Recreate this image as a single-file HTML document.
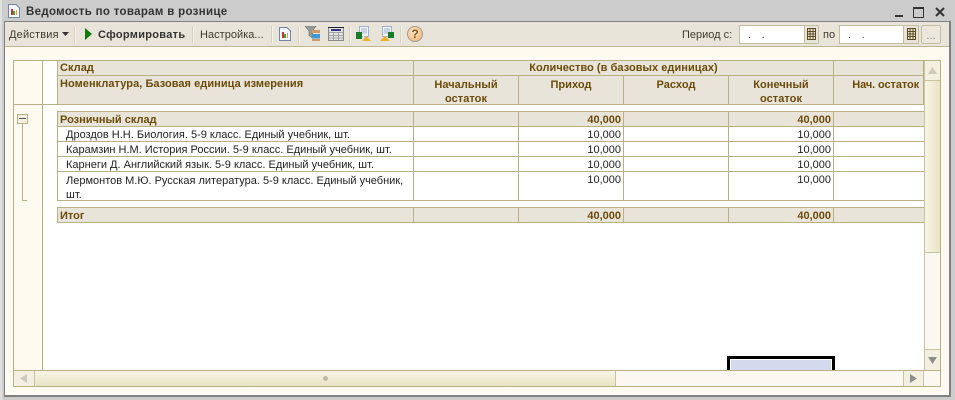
<!DOCTYPE html>
<html><head><meta charset="utf-8">
<style>
html,body{margin:0;padding:0;background:#ccc;width:955px;height:400px;overflow:hidden}
#p{position:relative;width:955px;height:400px;overflow:hidden;font-family:"Liberation Sans",sans-serif;font-size:11px;color:#222}
.a{position:absolute}
.t{position:absolute;white-space:nowrap;line-height:13px}
.h{position:absolute;background:#e9e4d9;border:1px solid #b9b088;box-sizing:border-box;color:#6b4b0a;font-weight:bold;line-height:14px;letter-spacing:.05px}
.c{position:absolute;background:#fff;border:1px solid #b9b088;box-sizing:border-box;line-height:13px;white-space:nowrap;color:#222;padding-top:2px}
.g{background:#e9e4d9;color:#6b4b0a;font-weight:bold}
.r{text-align:right;padding-right:2px}
.sep{position:absolute;top:26px;width:1px;height:17px;background:#d6d0bd;border-right:1px solid #f6f3ea}
</style></head><body><div id="p">
<!-- frame -->
<div class="a" style="left:0;top:0;width:2px;height:400px;background:#e0e0e0"></div>
<div class="a" style="left:4px;top:21px;width:947px;height:376px;box-sizing:border-box;border:1px solid #808080;border-right:2px solid #808080;border-bottom:2px solid #808080;background:#fffaf0;box-shadow:inset 1px 0 0 #fff,inset -1px 0 0 #fff,inset 0 -1px 0 #fff"></div>
<!-- title -->
<svg class="a" style="left:8px;top:4px" width="12" height="14" viewBox="0 0 12 14"><path d="M.5 .5H8L11.500 4V13.500H.5Z" fill="#f4f6fa" stroke="#6f87a8"/><rect x="3" y="5" width="2" height="6" fill="#c33"/><rect x="5" y="7" width="2" height="4" fill="#3a3"/><rect x="8" y="6" width="1" height="5" fill="#d9a23a"/></svg>
<div class="t" style="left:26px;top:6px;font-weight:bold;font-size:11.500px;color:#333;letter-spacing:.32px">Ведомость по товарам в рознице</div>
<div class="a" style="left:895px;top:15px;width:8px;height:2px;background:#333"></div>
<div class="a" style="left:913px;top:7px;width:11px;height:11px;box-sizing:border-box;border:1px solid #333;border-top-width:2px"></div>
<svg class="a" style="left:935px;top:7px" width="10" height="10" viewBox="0 0 10 10"><path d="M1 1L9 9M9 1L1 9" stroke="#333" stroke-width="2"/></svg>
<!-- toolbar -->
<div class="a" style="left:5px;top:22px;width:944px;height:24px;background:#e9e4d9;border-bottom:1px solid #bdb58f"></div>
<div class="t" style="left:9px;top:29px;color:#3d3d2d;letter-spacing:.2px">Действия</div>
<svg class="a" style="left:62px;top:32px" width="7" height="4"><path d="M0 0H7L3.500 4Z" fill="#333"/></svg>
<div class="sep" style="left:74px"></div>
<svg class="a" style="left:85px;top:28px" width="7" height="12"><path d="M0 0L7 6L0 12Z" fill="#0f7a0f"/></svg>
<div class="t" style="left:98px;top:29px;font-weight:bold;color:#333;letter-spacing:.3px">Сформировать</div>
<div class="sep" style="left:192px"></div>
<div class="t" style="left:200px;top:29px;color:#3d3d2d;letter-spacing:.03px">Настройка...</div>
<div class="sep" style="left:271px"></div>
<svg class="a" style="left:279px;top:27px" width="12" height="14" viewBox="0 0 12 14"><path d="M.5 .5H8L11.500 4V13.500H.5Z" fill="#f4f6fa" stroke="#6f87a8"/><rect x="3" y="5" width="2" height="6" fill="#c33"/><rect x="5" y="7" width="2" height="4" fill="#3a3"/><rect x="8" y="6" width="1" height="5" fill="#d9a23a"/></svg>
<div class="sep" style="left:298px"></div>
<svg class="a" style="left:305px;top:26px" width="16" height="16" viewBox="0 0 16 16"><path d="M0 0H11L7.500 5V12L4 9.500V5Z" fill="#9a9a92" stroke="#6d6d68" stroke-width=".6"/><rect x="7" y="4" width="8" height="3" fill="#cf9a63"/><rect x="7" y="8" width="8" height="2.500" fill="#3b9ad2"/><rect x="7" y="10.500" width="8" height="2" fill="#3b9ad2"/><rect x="7" y="13" width="8" height="2" fill="#cf9a63"/></svg>
<svg class="a" style="left:328px;top:27px" width="16" height="14" viewBox="0 0 16 14"><rect x=".5" y=".5" width="15" height="13" fill="#e2e2e2" stroke="#8a8a8a"/><rect x="0" y="0" width="16" height="1" fill="#222"/><rect x="3" y="2" width="10" height="2" fill="#33338f"/><path d="M1 5.500H15M1 8.500H15M1 11H15M5.500 5V13M10.500 5V13" stroke="#a5a5a5"/></svg>
<div class="sep" style="left:349px"></div>
<svg class="a" style="left:355px;top:25px" width="18" height="18" viewBox="0 0 18 18"><rect x="4.500" y="1.500" width="9" height="10" fill="#f0f4fa" stroke="#9fb2c8"/><path d="M6 4H12M6 6H12M6 8H12" stroke="#9fb2c8"/><path d="M1 7H7V14H1Z" fill="#1d7a2a"/><path d="M7 13L9 11" stroke="#d0e0d0"/><path d="M7 16L11.500 11L16 16Z" fill="#e9b22e"/></svg>
<svg class="a" style="left:379px;top:25px" width="18" height="18" viewBox="0 0 18 18"><rect x="3.500" y="1.500" width="9" height="10" fill="#f0f4fa" stroke="#9fb2c8"/><path d="M5 4H11M5 6H11M5 8H11" stroke="#9fb2c8"/><path d="M9 7H15V13H9Z" fill="#1d7a2a"/><path d="M1 16L6 11L11 16Z" fill="#e9b22e"/></svg>
<div class="sep" style="left:400px"></div>
<div class="a" style="left:407px;top:26px;width:14px;height:14px;border-radius:50%;background:radial-gradient(circle at 40% 35%,#fde6c6,#f2ae6c);border:1px solid #a09a90;text-align:center;font-weight:bold;font-size:12px;line-height:14px;color:#7a5a2a">?</div>
<div class="t" style="left:682px;top:29px;color:#3d3d2d">Период с:</div>
<div class="a" style="left:739px;top:25px;width:66px;height:19px;box-sizing:border-box;background:#fff;border:1px solid #c4bea0;color:#444;padding-left:8px;padding-top:1px;line-height:17px;letter-spacing:1.5px">.&nbsp;&nbsp;.</div>
<div class="a" style="left:804px;top:25px;width:15px;height:19px;box-sizing:border-box;background:#e9e4d9;border:1px solid #c4bea0"></div>
<svg class="a" style="left:806px;top:28px" width="11" height="12" viewBox="0 0 11 12"><path d="M1.500 .5H9.500V11.500H1.500ZM1.500 3.500H9.500M1.500 6H9.500M1.500 8.500H9.500M4 .5V11.500M7 .5V11.500" fill="none" stroke="#5c4a20"/></svg>
<div class="t" style="left:823px;top:29px;color:#3d3d2d">по</div>
<div class="a" style="left:839px;top:25px;width:65px;height:19px;box-sizing:border-box;background:#fff;border:1px solid #c4bea0;color:#444;padding-left:8px;padding-top:1px;line-height:17px;letter-spacing:1.5px">.&nbsp;&nbsp;.</div>
<div class="a" style="left:903px;top:25px;width:16px;height:19px;box-sizing:border-box;background:#e9e4d9;border:1px solid #c4bea0"></div>
<svg class="a" style="left:906px;top:28px" width="11" height="12" viewBox="0 0 11 12"><path d="M1.500 .5H9.500V11.500H1.500ZM1.500 3.500H9.500M1.500 6H9.500M1.500 8.500H9.500M4 .5V11.500M7 .5V11.500" fill="none" stroke="#5c4a20"/></svg>
<div class="a" style="left:921px;top:25px;width:20px;height:19px;box-sizing:border-box;background:#ece7dc;border:1px solid #c4bea0;border-radius:2px;text-align:center;line-height:20px;color:#888">...</div>
<!-- grid -->
<div class="a" style="left:13px;top:60px;width:928px;height:327px;box-sizing:border-box;border:1px solid #b9b088;background:#fff"></div>
<div class="a" style="left:14px;top:61px;width:28px;height:309px;background:#fffaf0"></div>
<div class="a" style="left:14px;top:104px;width:43px;height:1px;background:#b9b088"></div>
<div class="a" style="left:42px;top:61px;width:1px;height:309px;background:#b9b088"></div>
<!-- header -->
<div class="h" style="left:57px;top:60px;width:357px;height:16px;padding:0 2px">Склад</div>
<div class="h" style="left:57px;top:75px;width:357px;height:30px;padding:1px 2px">Номенклатура, Базовая единица измерения</div>
<div class="h" style="left:413px;top:60px;width:421px;height:16px;text-align:center">Количество (в базовых единицах)</div>
<div class="h" style="left:833px;top:60px;width:91px;height:16px"></div>
<div class="h" style="left:413px;top:75px;width:106px;height:30px;text-align:center;padding-top:2px">Начальный<br>остаток</div>
<div class="h" style="left:518px;top:75px;width:106px;height:30px;text-align:center;padding-top:2px">Приход</div>
<div class="h" style="left:623px;top:75px;width:106px;height:30px;text-align:center;padding-top:2px">Расход</div>
<div class="h" style="left:728px;top:75px;width:106px;height:30px;text-align:center;padding-top:2px">Конечный<br>остаток</div>
<div class="h" style="left:833px;top:75px;width:91px;height:30px;text-align:right;padding:2px 4px 0 0;white-space:nowrap;overflow:hidden;letter-spacing:-.1px">Нач. остаток</div>
<!-- tree -->
<div class="a" style="left:17px;top:114px;width:11px;height:10px;box-sizing:border-box;border:1px solid #b9b088;background:#f6f1e2"></div>
<div class="a" style="left:19px;top:118px;width:7px;height:1px;background:#555"></div>
<div class="a" style="left:22px;top:124px;width:1px;height:76px;background:#b9b088"></div>
<div class="a" style="left:22px;top:200px;width:5px;height:1px;background:#b9b088"></div>
<!-- group row -->
<div class="c g" style="left:57px;top:111px;width:357px;height:16px;padding-left:2px">Розничный склад</div>
<div class="c g" style="left:413px;top:111px;width:106px;height:16px"></div>
<div class="c g r" style="left:518px;top:111px;width:106px;height:16px">40,000</div>
<div class="c g" style="left:623px;top:111px;width:106px;height:16px"></div>
<div class="c g r" style="left:728px;top:111px;width:106px;height:16px">40,000</div>
<div class="c g" style="left:833px;top:111px;width:91px;height:16px;border-right:0"></div>
<!-- row 1 -->
<div class="c" style="left:57px;top:126px;width:357px;height:16px;padding-left:8px">Дроздов Н.Н. Биология. 5-9 класс. Единый учебник, шт.</div>
<div class="c" style="left:413px;top:126px;width:106px;height:16px"></div>
<div class="c r" style="left:518px;top:126px;width:106px;height:16px">10,000</div>
<div class="c" style="left:623px;top:126px;width:106px;height:16px"></div>
<div class="c r" style="left:728px;top:126px;width:106px;height:16px">10,000</div>
<div class="c" style="left:833px;top:126px;width:91px;height:16px;border-right:0"></div>
<!-- row 2 -->
<div class="c" style="left:57px;top:141px;width:357px;height:16px;padding-left:8px">Карамзин Н.М. История России. 5-9 класс. Единый учебник, шт.</div>
<div class="c" style="left:413px;top:141px;width:106px;height:16px"></div>
<div class="c r" style="left:518px;top:141px;width:106px;height:16px">10,000</div>
<div class="c" style="left:623px;top:141px;width:106px;height:16px"></div>
<div class="c r" style="left:728px;top:141px;width:106px;height:16px">10,000</div>
<div class="c" style="left:833px;top:141px;width:91px;height:16px;border-right:0"></div>
<!-- row 3 -->
<div class="c" style="left:57px;top:156px;width:357px;height:16px;padding-left:8px">Карнеги Д. Английский язык. 5-9 класс. Единый учебник, шт.</div>
<div class="c" style="left:413px;top:156px;width:106px;height:16px"></div>
<div class="c r" style="left:518px;top:156px;width:106px;height:16px">10,000</div>
<div class="c" style="left:623px;top:156px;width:106px;height:16px"></div>
<div class="c r" style="left:728px;top:156px;width:106px;height:16px">10,000</div>
<div class="c" style="left:833px;top:156px;width:91px;height:16px;border-right:0"></div>
<!-- row 4 -->
<div class="c" style="left:57px;top:171px;width:357px;height:30px;padding-left:8px;line-height:14px">Лермонтов М.Ю. Русская литература. 5-9 класс. Единый учебник,<br>шт.</div>
<div class="c" style="left:413px;top:171px;width:106px;height:30px"></div>
<div class="c r" style="left:518px;top:171px;width:106px;height:30px">10,000</div>
<div class="c" style="left:623px;top:171px;width:106px;height:30px"></div>
<div class="c r" style="left:728px;top:171px;width:106px;height:30px">10,000</div>
<div class="c" style="left:833px;top:171px;width:91px;height:30px;border-right:0"></div>
<!-- total -->
<div class="c g" style="left:57px;top:207px;width:357px;height:16px;padding-left:2px">Итог</div>
<div class="c g" style="left:413px;top:207px;width:106px;height:16px"></div>
<div class="c g r" style="left:518px;top:207px;width:106px;height:16px">40,000</div>
<div class="c g" style="left:623px;top:207px;width:106px;height:16px"></div>
<div class="c g r" style="left:728px;top:207px;width:106px;height:16px">40,000</div>
<div class="c g" style="left:833px;top:207px;width:91px;height:16px;border-right:0"></div>
<!-- black box -->
<div class="a" style="left:727px;top:356px;width:108px;height:14px;box-sizing:border-box;border:3px solid #000;border-bottom:0;background:#d4d9ee;box-shadow:inset 0 1px 0 #fff,inset 1px 0 0 #fff,inset -1px 0 0 #fff"></div>
<!-- vertical scroll -->
<div class="a" style="left:924px;top:61px;width:16px;height:325px;background:#faf8f0;border-left:1px solid #c9c3a2;box-sizing:border-box"></div>
<div class="a" style="left:925px;top:61px;width:15px;height:20px;background:#f3f0e2;border-bottom:1px solid #c9c3a2;box-sizing:border-box"></div>
<svg class="a" style="left:928px;top:67px" width="9" height="7"><path d="M0 7L4.500 0L9 7Z" fill="#cfcabc"/></svg>
<div class="a" style="left:925px;top:81px;width:15px;height:172px;background:linear-gradient(90deg,#f8f5e6,#e8e3c4);border-bottom:1px solid #c9c3a2;box-sizing:border-box"></div>
<div class="a" style="left:925px;top:349px;width:15px;height:21px;background:#f3f0e2;border-top:1px solid #c9c3a2;box-sizing:border-box"></div>
<svg class="a" style="left:928px;top:357px" width="9" height="7"><path d="M0 0H9L4.500 7Z" fill="#8f8f8c"/></svg>
<!-- horizontal scroll -->
<div class="a" style="left:14px;top:370px;width:926px;height:16px;background:#faf8f0;border-top:1px solid #b9b088;box-sizing:border-box"></div>
<div class="a" style="left:14px;top:371px;width:21px;height:15px;background:#f3f0e2;border-right:1px solid #c9c3a2;box-sizing:border-box"></div>
<svg class="a" style="left:20px;top:374px" width="7" height="9"><path d="M7 0V9L0 4.500Z" fill="#cfcabc"/></svg>
<div class="a" style="left:35px;top:371px;width:581px;height:15px;background:linear-gradient(180deg,#f8f5e6,#e8e3c4);border-right:1px solid #c9c3a2;box-sizing:border-box"></div>
<div class="a" style="left:323px;top:376px;width:5px;height:5px;border-radius:50%;background:#bdbcaa"></div>
<div class="a" style="left:903px;top:371px;width:21px;height:15px;background:#f3f0e2;border-left:1px solid #c9c3a2;border-right:1px solid #c9c3a2;box-sizing:border-box"></div>
<svg class="a" style="left:910px;top:374px" width="7" height="9"><path d="M0 0V9L7 4.500Z" fill="#8f8f8c"/></svg>
</div></body></html>
